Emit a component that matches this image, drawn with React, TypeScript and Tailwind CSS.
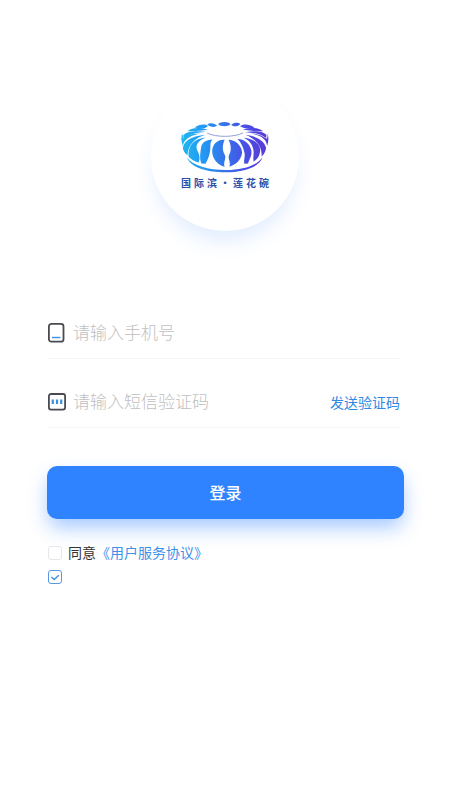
import React, { useState } from "react";

const Logo = () => {
  return (
    <svg viewBox="155 150 266 158" className="w-22 h-13" aria-hidden="true">
      <defs>
        <linearGradient
          id="bowl"
          gradientUnits="userSpaceOnUse"
          x1="156"
          y1="0"
          x2="420"
          y2="0"
        >
          <stop offset="0" stopColor="#1fb8ee" />
          <stop offset="0.25" stopColor="#2398f5" />
          <stop offset="0.5" stopColor="#3574ea" />
          <stop offset="0.75" stopColor="#4a4ce6" />
          <stop offset="1" stopColor="#5c3ad2" />
        </linearGradient>
      </defs>
      <g fill="url(#bowl)">
        {/* far rim */}
        <path d="M267 160C273 151 299 151 305 160C298 168 274 168 267 160Z" />
        <path d="M234 160C242 154 258 156 264 164C258 171 241 169 234 160Z" />
        <path d="M307 162C314 154 328 154 335 159C329 166 315 169 307 162Z" />
        <path d="M196 170C208 160 228 158 236 165C228 174 212 175 196 170Z" />
        <path d="M334 166C342 158 362 159 378 170C364 175 346 174 334 166Z" />
        {/* left petals */}
        <path d="M174 181C188 168 214 169 236 176C218 180 194 182 174 181Z" />
        <path d="M161 194C170 180 204 179 230 183C204 186 180 189 162 204Z" />
        <path d="M158 187C154 198 155 214 160 226C162 208 180 194 212 189C190 188 172 192 161 203Z" />
        <path d="M160 231C164 209 188 196 228 192C196 202 176 222 174 254C166 248 161 240 160 231Z" />
        <path d="M177 257C176 222 194 204 230 200C206 210 198 222 203 238C211 252 213 264 208 276C194 272 183 266 177 257Z" />
        <path d="M216 279C210 262 213 248 215 232C217 215 229 207 250 206C241 216 245 226 243 240C241 256 235 269 229 280Z" />
        {/* middle pair */}
        <path d="M287 207C264 206 249 221 249 244C251 267 266 283 287 289C282 276 292 264 288 254C280 240 279 224 287 207Z" />
        <path d="M299 207C318 208 338 222 340 246C338 267 322 283 301 289C307 276 296 264 300 254C308 240 307 224 299 207Z" />
        {/* right petals */}
        <path d="M326 205C350 206 364 222 368 240C371 256 361 268 358 279L347 280C344 270 350 260 347 246C343 228 337 216 326 205Z" />
        <path d="M345 201C372 204 394 216 395 238C394 256 385 268 375 273C372 260 377 250 374 236C370 218 360 208 345 201Z" />
        <path d="M350 192C384 196 408 210 413 232C411 244 406 252 399 258C402 226 380 204 350 192Z" />
        <path d="M364 188C396 192 414 204 416 226C421 212 421 198 417 187C418 196 417 202 414 204C402 194 384 188 364 188Z" />
        <path d="M350 184C374 179 402 179 414 192L413 202C396 188 374 185 350 184Z" />
        <path d="M342 176C362 169 388 168 404 181C384 182 364 180 342 176Z" />
        {/* base */}
        <path d="M172 261C192 286 236 299 290 299C342 299 384 286 402 260C392 290 346 306 290 306C234 306 184 292 172 261Z" />
      </g>
      <path
        d="M234 187C262 200 316 200 343 186"
        fill="none"
        stroke="#8e9ed8"
        strokeWidth="3"
      />
    </svg>
  );
};

const PhoneIcon = () => {
  return (
    <svg viewBox="0 0 18 20" className="w-4.5 h-5 shrink-0" fill="none" aria-hidden="true">
      <rect x="0.9" y="0.9" width="14.6" height="17.8" rx="2.5" stroke="#4a4a50" strokeWidth="1.8" />
      <path d="M4 14.5h8.4" stroke="#3b8fe0" strokeWidth="1.4" />
    </svg>
  );
};

const CodeIcon = () => {
  return (
    <svg viewBox="0 0 18 18" className="w-4.5 h-4.5 shrink-0" fill="none" aria-hidden="true">
      <rect x="0.9" y="1" width="16.2" height="15.6" rx="2" stroke="#4a4a50" strokeWidth="1.8" />
      <path d="M4.8 6.5v4.6M9 6.5v4.6M13.2 6.5v4.6" stroke="#3b8fe0" strokeWidth="2.2" />
    </svg>
  );
};

const checkboxClass =
  "appearance-none h-3.5 w-3.5 rounded-[3px] border border-gray-200 bg-white cursor-pointer checked:border-[#5a97e6]";

const App = () => {
  const [agree, setAgree] = useState(false);
  const [remember, setRemember] = useState(true);

  return (
    <main className="min-h-dvh w-full bg-white px-12 pt-[83px] font-['Noto_Sans_CJK_SC','Noto_Sans',sans-serif]">
      <div className="mx-auto h-37 w-37 rounded-full bg-white shadow-[0_14px_20px_-4px_rgba(48,130,255,0.14)] flex flex-col items-center pt-[38px]">
        <Logo />
        <h1 className="mt-1 flex gap-[3px] text-[10px] leading-3 font-bold text-[#2c50a8]">
          {["国", "际", "滨", "·", "莲", "花", "碗"].map((char) => (
            <span key={char} className="w-2.5 text-center">
              {char}
            </span>
          ))}
        </h1>
      </div>

      <form className="mt-[77px]" onSubmit={(e) => e.preventDefault()}>
        <div className="mr-0.5 flex h-[51px] items-center gap-[7px] border-b border-gray-100">
          <PhoneIcon />
          <input
            type="tel"
            aria-label="手机号"
            placeholder="请输入手机号"
            className="min-w-0 flex-1 pb-0.5 text-[17px] leading-6 text-gray-800 outline-none font-light placeholder:text-[#c0c0c0]"
          />
        </div>

        <div className="mt-[18px] mr-0.5 flex h-[51px] items-center gap-[7px] border-b border-gray-100">
          <CodeIcon />
          <input
            type="text"
            aria-label="短信验证码"
            placeholder="请输入短信验证码"
            className="min-w-0 flex-1 pb-0.5 text-[17px] leading-6 text-gray-800 outline-none font-light placeholder:text-[#c0c0c0]"
          />
          <button type="button" className="shrink-0 text-sm text-[#3089e2] cursor-pointer">
            发送验证码
          </button>
        </div>

        <div className="-ml-px -mr-0.5">
          <button
            type="submit"
            className="mt-[38px] h-[53px] w-full rounded-[10px] bg-[#3083ff] pb-0.5 text-base font-medium text-white shadow-[0_10px_20px_-2px_rgba(48,131,255,0.45)] cursor-pointer"
          >
            登录
          </button>
        </div>

        <div className="mt-6 flex h-5 items-center text-sm">
          <input
            id="agree"
            type="checkbox"
            checked={agree}
            onChange={(e) => setAgree(e.target.checked)}
            className={checkboxClass}
          />
          <label htmlFor="agree" className="ml-1.5 pb-0.5 text-[#333333]">
            同意
          </label>
          <a href="#agreement" className="pb-0.5 text-[#4190e8]">
            《用户服务协议》
          </a>
        </div>

        <div className="relative mt-1 flex h-5 w-3.5 items-center">
          <input
            type="checkbox"
            aria-label="记住登录"
            checked={remember}
            onChange={(e) => setRemember(e.target.checked)}
            className={checkboxClass}
          />
          {remember && (
            <svg
              viewBox="0 0 14 14"
              className="pointer-events-none absolute inset-x-0 h-3.5 w-3.5"
              fill="none"
              aria-hidden="true"
            >
              <path d="M3.4 7l2.8 2.6 4.6-4.4" stroke="#4a8de0" strokeWidth="1.4" />
            </svg>
          )}
        </div>
      </form>
    </main>
  );
};

export default App;
